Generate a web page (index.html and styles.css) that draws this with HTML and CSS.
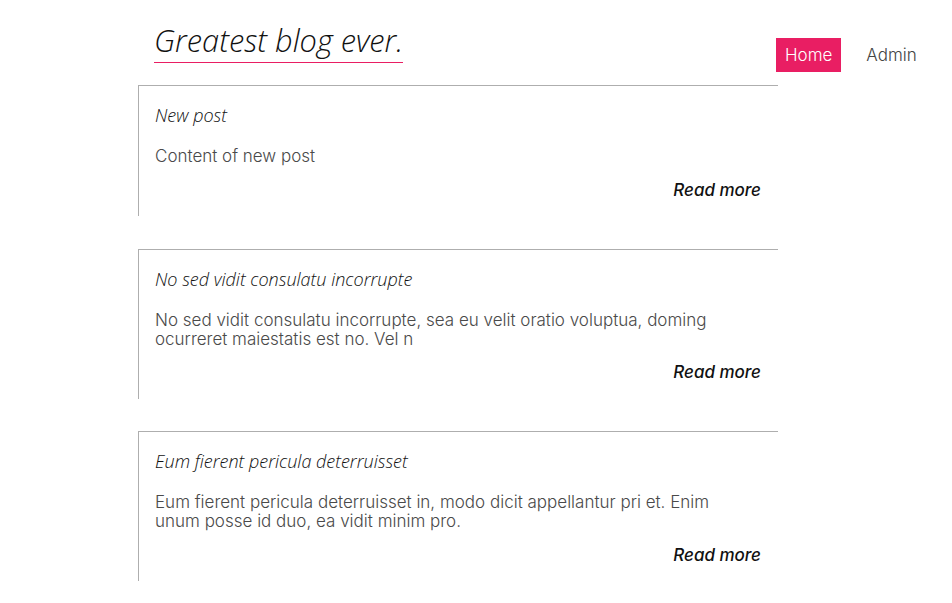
FILE: index.html
```html
<!DOCTYPE html>
<html lang="en">
<head>
<meta charset="utf-8">
<title>Greatest blog ever.</title>
<link rel="stylesheet" href="styles.css">
</head>
<body>
<div class="layout">
  <main class="main">
    <header class="header">
      <h1 class="brand">Greatest blog ever.</h1>
    </header>
    <article class="post">
      <h2 class="post-title">New post</h2>
      <p class="post-body">Content of new post</p>
      <div class="post-footer"><a class="read-more" href="#">Read more</a></div>
    </article>
    <article class="post">
      <h2 class="post-title">No sed vidit consulatu incorrupte</h2>
      <p class="post-body">No sed vidit consulatu incorrupte, sea eu velit oratio voluptua, doming ocurreret maiestatis est no. Vel n</p>
      <div class="post-footer"><a class="read-more" href="#">Read more</a></div>
    </article>
    <article class="post">
      <h2 class="post-title">Eum fierent pericula deterruisset</h2>
      <p class="post-body">Eum fierent pericula deterruisset in, modo dicit appellantur pri et. Enim unum posse id duo, ea vidit minim pro.</p>
      <div class="post-footer"><a class="read-more" href="#">Read more</a></div>
    </article>
  </main>
  <nav class="nav">
    <a class="nav-link is-active" href="#">Home</a>
    <a class="nav-link" href="#">Admin</a>
  </nav>
</div>
</body>
</html>
```
FILE: styles.css
```css
html, body {
  margin: 0;
  padding: 0;
  background: #fff;
}

body {
  font-family: Inter, "Noto Sans", sans-serif;
  font-weight: 300;
  font-size: 17px;
  color: #4a4a4a;
}

.layout {
  display: flex;
  align-items: flex-start;
}

.main {
  margin-left: 138px;
  width: 640px;
  flex: none;
}

.header {
  padding-top: 19px;
  margin-bottom: 22px;
}

.brand {
  display: inline-block;
  margin: 0 0 0 16px;
  padding-bottom: 1px;
  font-family: "Open Sans", sans-serif;
  font-weight: 300;
  font-style: italic;
  font-size: 30.8px;
  line-height: 42px;
  color: #111;
  border-bottom: 1px solid #e91e63;
}

.post {
  border-top: 1px solid #aeaeae;
  border-left: 1px solid #aeaeae;
  padding: 17px 17px 16px 16px;
  margin-bottom: 32.5px;
}

.post-title {
  margin: 0;
  font-family: "Open Sans", sans-serif;
  font-weight: 300;
  font-style: italic;
  font-size: 18px;
  line-height: 24.5px;
  color: #111;
}

.post-body {
  max-width: 590px;
  margin: 19.5px 0 0;
  line-height: 19px;
}

.post-footer {
  display: flex;
  justify-content: flex-end;
  margin-top: 14.5px;
  line-height: 19.5px;
}

.read-more {
  font-style: italic;
  font-weight: 500;
  color: #111;
  text-decoration: none;
}

.nav {
  display: flex;
  gap: 16px;
  margin-left: -2px;
  margin-top: 38px;
}

.nav-link {
  padding: 7px 9px;
  line-height: 20px;
  color: #444;
  text-decoration: none;
}

.nav-link.is-active {
  background: #e91e63;
  color: #fff;
}
```
